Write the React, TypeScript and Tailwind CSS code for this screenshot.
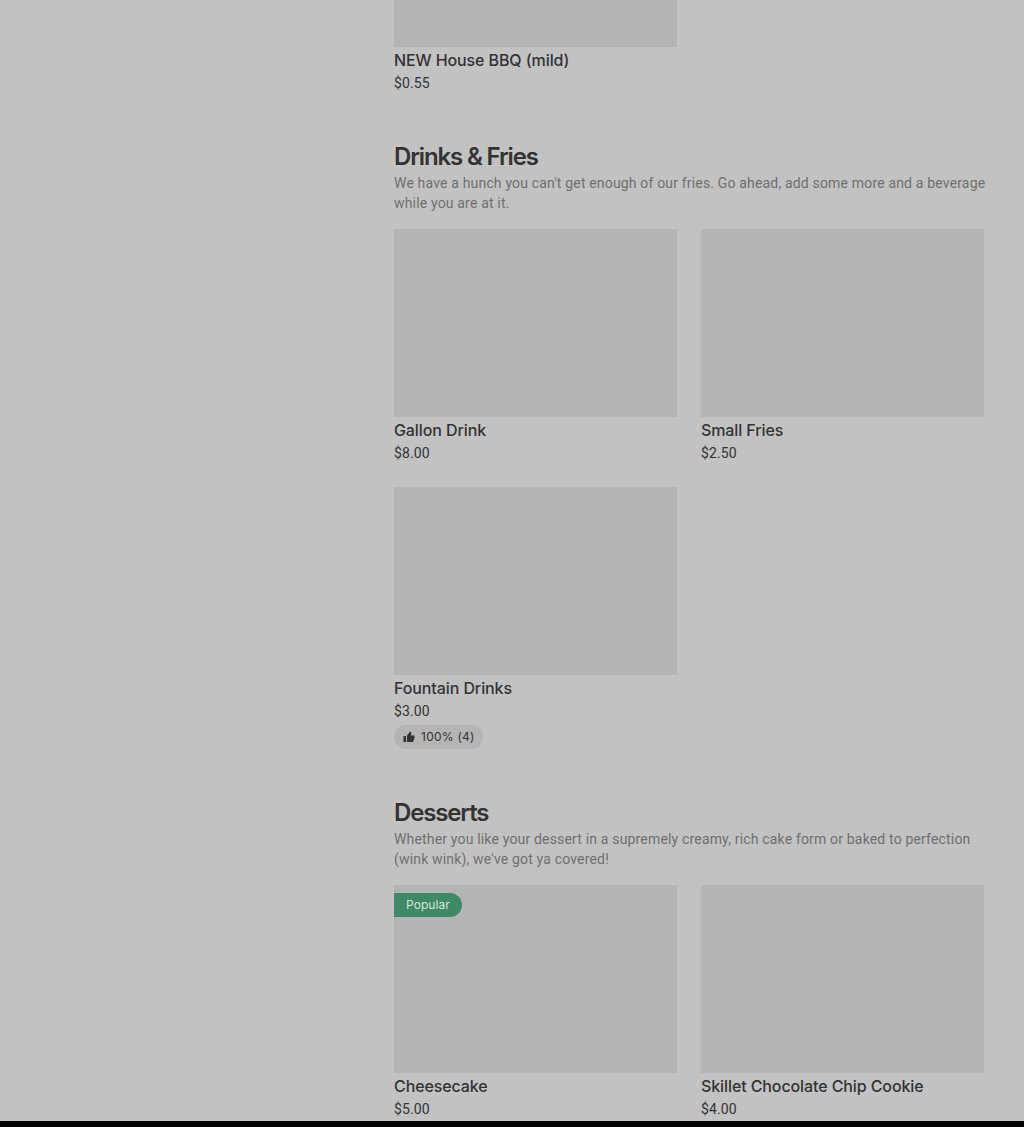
const font = { fontFamily: '"Inter", "Noto Sans", sans-serif' };
const bodyFont = { fontFamily: '"Roboto", "Noto Sans", sans-serif' };

function Item({ name, price, popular, likes }: { name: string; price: string; popular?: boolean; likes?: string }) {
  return (
    <div className="w-[283px]">
      <div className="relative h-[188px] bg-[#b4b4b4]">
        {popular && (
          <span className="absolute left-0 top-[8px] flex h-[24px] items-center rounded-r-full bg-[#3f8a66] pl-[12px] pr-[12px] text-[12px] tracking-[0.05px] text-[#d4e4dc]">
            Popular
          </span>
        )}
      </div>
      <div className="mt-[3px] text-[16px] leading-[20px] font-medium tracking-[-0.1px] text-[#333333]">{name}</div>
      <div style={bodyFont} className="mt-[3px] text-[14px] leading-[20px] tracking-[0.1px] text-[#333333]">{price}</div>
      {likes && (
        <div className="mt-[4px] flex h-[24px] w-fit items-center gap-[6px] rounded-full bg-[#b4b4b4] pl-[9px] pr-[8px] text-[12px] tracking-[0.25px] text-[#333333]">
          <svg width="12" height="12" viewBox="0 0 24 24" fill="currentColor">
            <path d="M1 10h5v12H1zM8 22V9l6-8 2 1.5c.8.6 1 1.4.8 2.2L15.5 9H23v5l-3 8z" />
          </svg>
          {likes}
        </div>
      )}
    </div>
  );
}

function Section({ title, blurb, children }: { title: string; blurb: string; children: React.ReactNode }) {
  return (
    <section>
      <h2 className="text-[24px] leading-[32px] font-semibold tracking-[-1.15px] text-[#333333]">{title}</h2>
      <p style={bodyFont} className="w-[598px] text-[14px] leading-[20px] tracking-[0.17px] text-[#6f6f6f]">{blurb}</p>
      <div className="mt-[16px] grid grid-cols-[283px_283px] gap-x-[24px] gap-y-[24px]">{children}</div>
    </section>
  );
}

export default function App() {
  return (
    <div style={font} className="h-[1127px] overflow-hidden bg-[#c2c2c2]">
      <div className="h-[1121px] overflow-hidden pl-[394px]">
        <div className="w-[590px]">
          <div className="h-[47px] w-[283px] bg-[#b4b4b4]" />
          <div className="mt-[3px] text-[16px] leading-[20px] font-medium tracking-[-0.1px] text-[#333333]">NEW House BBQ (mild)</div>
          <div style={bodyFont} className="mt-[3px] text-[14px] leading-[20px] tracking-[0.1px] text-[#333333]">$0.55</div>
          <div className="mt-[48px]">
            <Section
              title="Drinks & Fries"
              blurb="We have a hunch you can't get enough of our fries. Go ahead, add some more and a beverage while you are at it."
            >
              <Item name="Gallon Drink" price="$8.00" />
              <Item name="Small Fries" price="$2.50" />
              <Item name="Fountain Drinks" price="$3.00" likes="100% (4)" />
            </Section>
          </div>
          <div className="mt-[48px]">
            <Section
              title="Desserts"
              blurb="Whether you like your dessert in a supremely creamy, rich cake form or baked to perfection (wink wink), we've got ya covered!"
            >
              <Item name="Cheesecake" price="$5.00" popular />
              <Item name="Skillet Chocolate Chip Cookie" price="$4.00" />
            </Section>
          </div>
        </div>
      </div>
      <div className="h-[6px] bg-black" />
    </div>
  );
}
